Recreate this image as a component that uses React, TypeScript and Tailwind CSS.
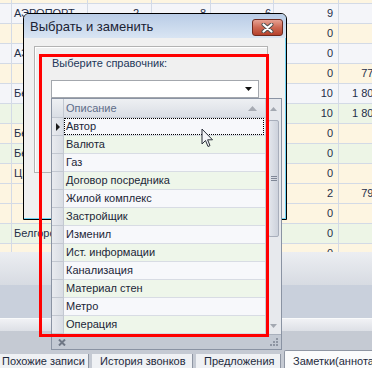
import React from 'react';

const CREAM = 'bg-[#fdf5e1]';
const GREEN = 'bg-[#edf5e6]';
const LAV = 'bg-[#f4f5f9]';

type Row = { bg: string; name?: string; a?: string; b?: string; c?: string; d?: string; e?: string };

const rows: Row[] = [
  { bg: CREAM },
  { bg: LAV, name: 'АЭРОПОРТ', a: '2', b: '8', c: '6', d: '9' },
  { bg: CREAM, d: '0' },
  { bg: LAV, name: 'АЭРОПОРТ', d: '0' },
  { bg: CREAM, d: '0', e: '775 000' },
  { bg: LAV, name: 'Белгород', d: '10', e: '1 800 000' },
  { bg: GREEN, d: '10', e: '1 800 000' },
  { bg: CREAM, name: 'Белгород', d: '0' },
  { bg: GREEN, name: 'Белгород', d: '0' },
  { bg: CREAM, name: 'ЦЕНТР', d: '0' },
  { bg: CREAM, d: '2', e: '790 000' },
  { bg: CREAM, d: '0' },
  { bg: GREEN, name: 'Белгород', d: '0' },
  { bg: CREAM, d: '0' },
];

const items = [
  'Автор',
  'Валюта',
  'Газ',
  'Договор посредника',
  'Жилой комплекс',
  'Застройщик',
  'Изменил',
  'Ист. информации',
  'Канализация',
  'Материал стен',
  'Метро',
  'Операция',
];

const cell = 'h-full shrink-0 border-r border-[#d3dae6] truncate';

function BackGrid() {
  return (
    <div className="h-[252px] overflow-hidden">
      <div className="-mt-[16px] flex flex-col">
        {rows.map((r, i) => (
          <div key={i} className={`flex h-[20px] border-b border-[#d3dae6] leading-[19px] ${r.bg}`}>
            <div className={`${cell} w-[12px]`} />
            <div className={`${cell} w-[76px] pl-[2px]`}>{r.name}</div>
            <div className={`${cell} w-[64px] pr-[12px] text-right`}>{r.a}</div>
            <div className={`${cell} w-[59px] pr-[4px] text-right`}>{r.b}</div>
            <div className={`${cell} w-[63px] pr-[2px] text-right`}>{r.c}</div>
            <div className={`${cell} w-[65px] pr-[5px] text-right`}>{r.d}</div>
            <div className={`${cell} w-[64px] pr-[1px] text-right whitespace-nowrap`}>{r.e}</div>
          </div>
        ))}
      </div>
    </div>
  );
}

function Tabs() {
  return (
    <div className="flex h-[18px] items-end bg-[#c5cad3] text-[11px] leading-[14px] text-[#1e2a3c]">
      <div className="h-[14px] w-[88px] shrink-0 whitespace-nowrap bg-[#eff1f4] pl-[2px]">Похожие записи</div>
      <div className="h-[14px] w-[4px] shrink-0 border-l border-[#8f96a3]" />
      <div className="h-[14px] w-[100px] shrink-0 whitespace-nowrap bg-[#eff1f4] pl-[8px]">История звонков</div>
      <div className="h-[14px] w-[4px] shrink-0 border-l border-[#8f96a3]" />
      <div className="h-[14px] w-[84px] shrink-0 whitespace-nowrap bg-[#eff1f4] pl-[8px]">Предложения</div>
      <div className="h-[14px] w-[4px] shrink-0 border-l border-[#8f96a3]" />
      <div className="h-[18px] flex-1 whitespace-nowrap rounded-t-[2px] border border-b-0 border-[#8f96a3] bg-[#fafbfc] pl-[8px] pt-[3px]">
        Заметки(аннотация)
      </div>
    </div>
  );
}

function Dialog() {
  return (
    <div className="absolute left-[23px] top-[13px] flex h-[207px] w-[264px] flex-col overflow-hidden rounded-t-[6px] border border-black bg-[#f0f0f0] shadow-[inset_-1px_-1px_0_#6fd3f2]">
      <div className="flex h-[24px] shrink-0 items-start justify-between bg-linear-to-b from-[#b9cce6] to-[#d9e5f3]">
        <div className="pl-[6px] pt-[5px] text-[13px] leading-[15px] text-[#1a2233]">Выбрать и заменить</div>
        <div className="mr-[3px] mt-[5px] flex h-[17px] w-[31px] items-center justify-center rounded-[3px] border border-[#6e2a1f] bg-linear-to-b from-[#e6a193] via-[#cd6853] to-[#b5412c]">
          <svg width="13" height="10" viewBox="0 0 13 10">
            <path d="M2.5 1.5 L10.5 8.5 M10.5 1.5 L2.5 8.5" stroke="#4b4b4b" strokeWidth="4" strokeLinecap="round" />
            <path d="M2.5 1.5 L10.5 8.5 M10.5 1.5 L2.5 8.5" stroke="#ffffff" strokeWidth="2.2" strokeLinecap="round" />
          </svg>
        </div>
      </div>
      <div className="ml-[10px] mt-[8px] h-[127px] w-[234px] border border-[#b3b3b3] shadow-[inset_1px_1px_0_#ffffff]">
        <div className="pl-[17px] pt-[10px] text-[11px] leading-[13px] text-[#22375a]">Выберите справочник:</div>
        <div className="ml-[16px] mt-[10px] flex h-[18px] w-[208px] items-center justify-end border border-[#a3a7ad] bg-white pr-[6px]">
          <svg width="7" height="4" viewBox="0 0 7 4">
            <path d="M0 0 H7 L3.5 4 Z" fill="#111" />
          </svg>
        </div>
      </div>
    </div>
  );
}

function Popup() {
  return (
    <div className="absolute left-[51px] top-[98px] flex h-[252px] w-[231px] flex-col border border-[#8a93a3] bg-[#eceef2] text-[11px]">
      <div className="flex h-[235px]">
        <div className="flex flex-1 flex-col">
          <div className="flex h-[19px] shrink-0 border-b border-[#c3c8d1] bg-linear-to-b from-[#eef0f3] to-[#dadee5]">
            <div className="w-[12px] shrink-0 border-r border-[#c3c8d1]" />
            <div className="flex flex-1 items-center justify-between pl-[2px] pr-[8px] leading-[18px] text-[#5e6c89]">
              <span>Описание</span>
              <svg width="9" height="5" viewBox="0 0 9 5">
                <path d="M0 5 L4.5 0 L9 5 Z" fill="#a7abb3" />
              </svg>
            </div>
          </div>
          {items.map((t, i) => (
            <div key={t} className="flex h-[18px] shrink-0">
              <div className="flex w-[12px] shrink-0 items-center justify-center border-b border-r border-[#c3c8d1] bg-linear-to-r from-[#e9ebef] to-[#d9dde4]">
                {i === 0 && (
                  <svg width="4" height="8" viewBox="0 0 4 8">
                    <path d="M0 0 L4 4 L0 8 Z" fill="#1b1b1b" />
                  </svg>
                )}
              </div>
              <div className={`flex-1 border-b border-[#d8dce4] ${i % 2 === 0 ? 'bg-[#f7f8fb]' : 'bg-[#eef6ea]'}`}>
                {i === 0 ? (
                  <div className="mr-[1px] h-[17px] border border-dotted border-black pl-[1px] leading-[15px] text-[#1b2638]">{t}</div>
                ) : (
                  <div className="pl-[2px] leading-[17px] text-[#1b2638]">{t}</div>
                )}
              </div>
            </div>
          ))}
        </div>
        <div className="flex w-[16px] shrink-0 flex-col items-center border-l border-[#c9cdd5] bg-[#e7e9ed]">
          <div className="flex h-[19px] items-center">
            <svg width="7" height="4" viewBox="0 0 7 4">
              <path d="M0 4 L3.5 0 L7 4 Z" fill="#a3a8b1" />
            </svg>
          </div>
          <div className="mt-[2px] flex h-[117px] w-[11px] flex-col items-center justify-center gap-[1px] rounded-[2px] border border-[#a8aebb] bg-linear-to-r from-[#e3e6ec] to-[#cdd2dc]">
            <div className="h-[1px] w-[6px] bg-[#7f8797]" />
            <div className="h-[1px] w-[6px] bg-[#7f8797]" />
            <div className="h-[1px] w-[6px] bg-[#7f8797]" />
          </div>
          <div className="flex-1" />
          <div className="flex h-[16px] items-center">
            <svg width="7" height="4" viewBox="0 0 7 4">
              <path d="M0 0 H7 L3.5 4 Z" fill="#a3a8b1" />
            </svg>
          </div>
        </div>
      </div>
      <div className="flex h-[15px] shrink-0 items-center justify-between border-t border-[#a9b0bc] bg-[#c3c9d3] pl-[6px] pr-[2px]">
        <svg width="8" height="7" viewBox="0 0 8 7">
          <path d="M1 0.5 L7 6.5 M7 0.5 L1 6.5" stroke="#6f7785" strokeWidth="2" />
        </svg>
        <svg width="10" height="10" viewBox="0 0 10 10">
          <rect x="7" y="1" width="2" height="2" fill="#8e95a2" />
          <rect x="4" y="4" width="2" height="2" fill="#8e95a2" />
          <rect x="7" y="4" width="2" height="2" fill="#8e95a2" />
          <rect x="1" y="7" width="2" height="2" fill="#8e95a2" />
          <rect x="4" y="7" width="2" height="2" fill="#8e95a2" />
          <rect x="7" y="7" width="2" height="2" fill="#8e95a2" />
        </svg>
      </div>
    </div>
  );
}

export default function App() {
  return (
    <div className="relative h-[368px] w-[372px] overflow-hidden bg-[#e6e8ec] font-['Liberation_Sans',Arial,sans-serif] text-[11px] text-[#1f2e48]">
      <div className="flex h-full flex-col">
        <BackGrid />
        <div className="h-[33px] bg-linear-to-b from-[#eceef2] to-[#d7dbe2]" />
        <div className="h-[33px] bg-[#c9d0dc]" />
        <div className="h-[13px] border-t border-[#f9fafb] bg-linear-to-b from-[#f1f2f5] to-[#dde0e6]" />
        <div className="h-[19px] bg-[#c5cad3]" />
        <Tabs />
      </div>

      <Dialog />
      <Popup />

      {/* red annotation frame */}
      <div className="pointer-events-none absolute left-[39px] top-[54px] h-[283px] w-[230px] border-[3px] border-[#ff0000]" />

      {/* mouse pointer */}
      <svg className="absolute left-[201px] top-[128px]" width="13" height="20" viewBox="0 0 13 20">
        <path d="M1 1 L1 16 L4.5 12.5 L7 18.5 L9 17.6 L6.6 11.8 L11.5 11.8 Z" fill="#f4f5f8" stroke="#2a2f3a" strokeWidth="1" strokeLinejoin="round" />
      </svg>
    </div>
  );
}
